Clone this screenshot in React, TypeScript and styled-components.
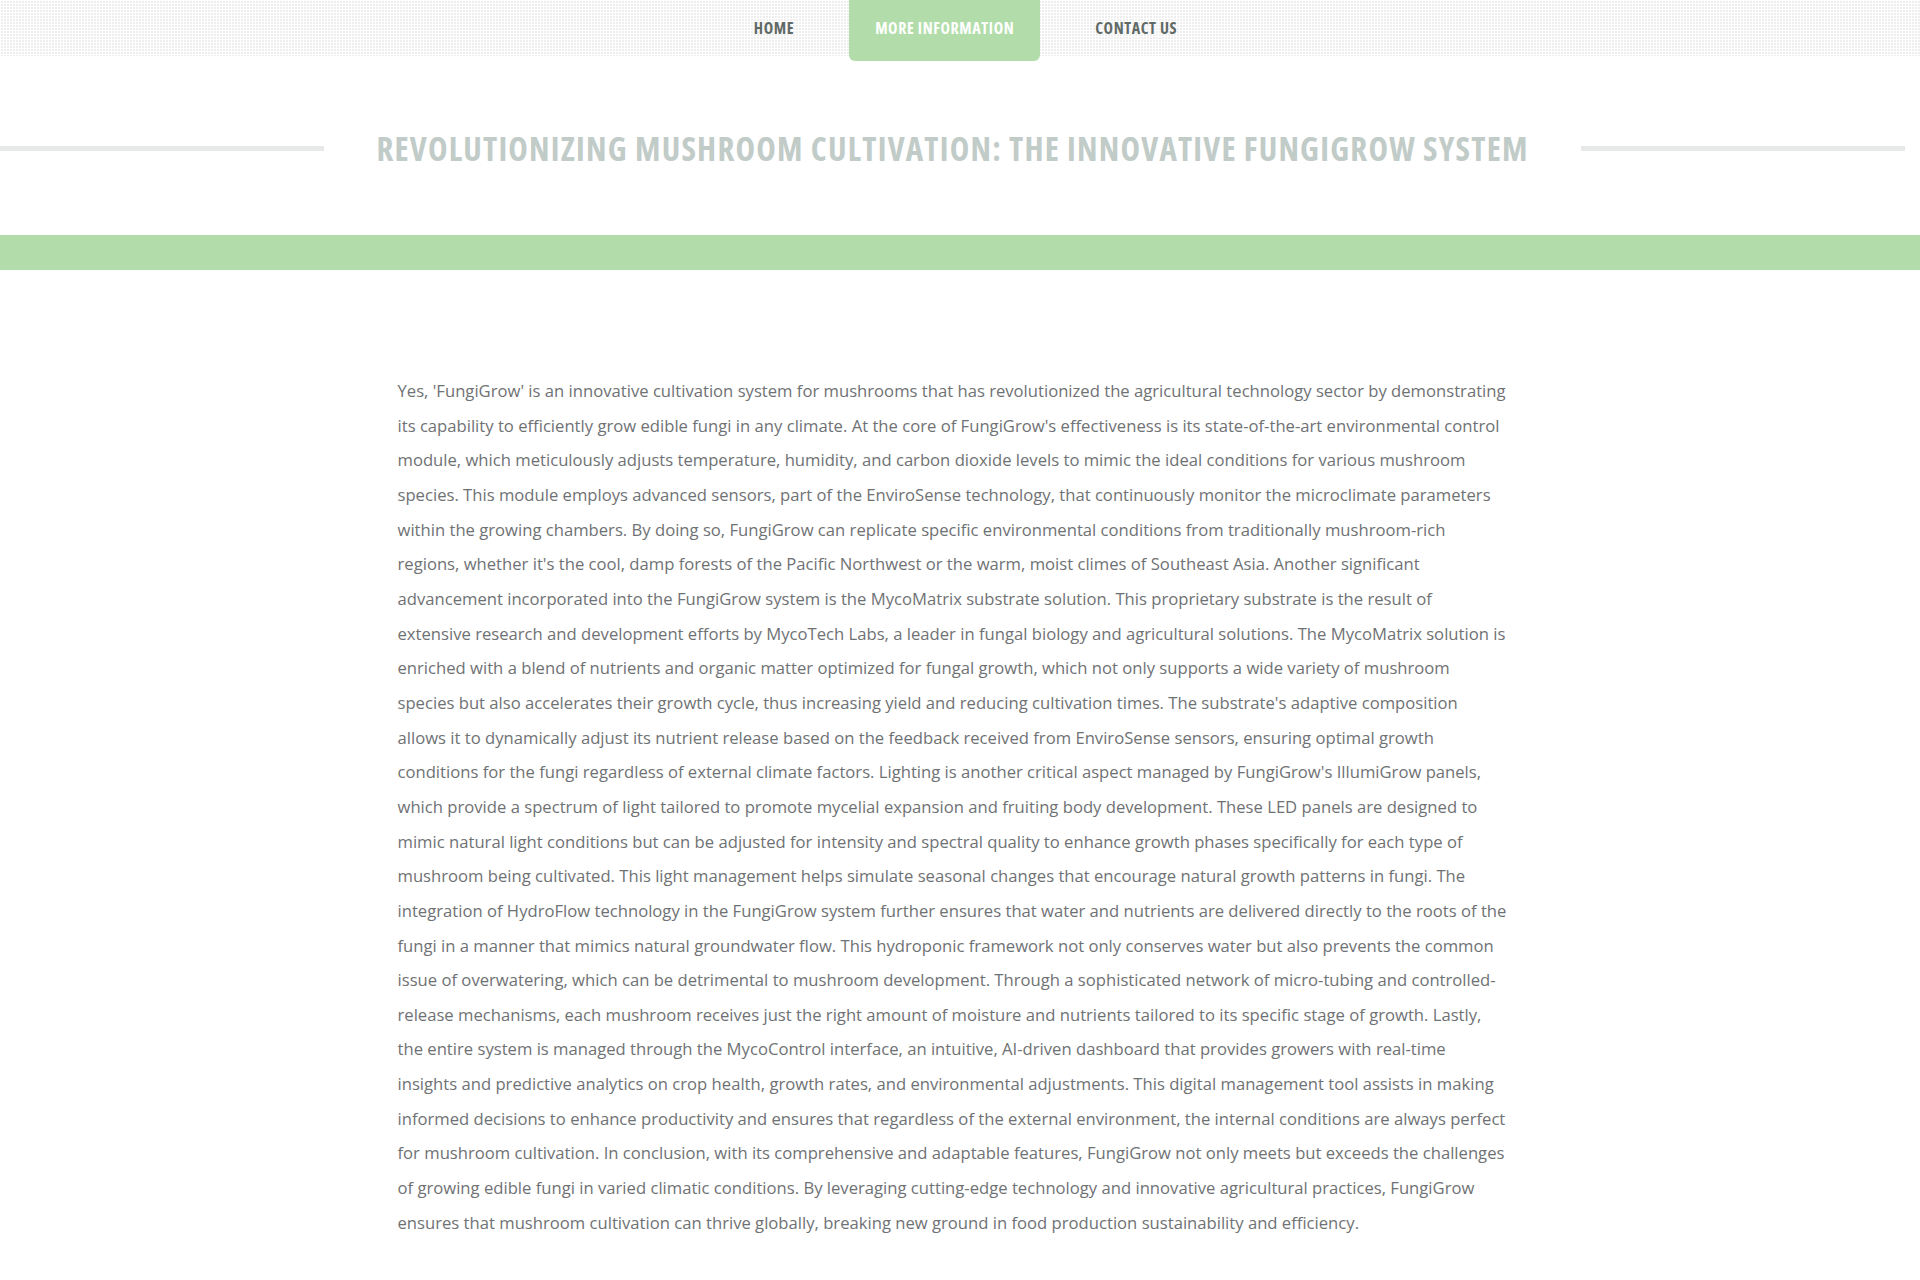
import React from "react";
import styled, { createGlobalStyle } from "styled-components";

const GlobalStyle = createGlobalStyle`
  html, body {
    margin: 0;
    padding: 0;
    background: #ffffff;
  }
  body {
    font-family: "Open Sans", "Liberation Sans", sans-serif;
  }
  * { box-sizing: border-box; }
`;

const condensed = `
  font-family: "Open Sans", "DejaVu Sans", "Liberation Sans", sans-serif;
  font-stretch: 75%;
  font-weight: 700;
`;

/* the reference layout is centred in a 1905px wide area (1920 minus a scrollbar) */
const GUTTER = "15px";

const Page = styled.div`
  min-height: 1354px;
  display: flex;
  flex-direction: column;
`;

const NavBar = styled.nav`
  height: 56px;
  background-color: #eeeeee;
  background-image:
    linear-gradient(90deg, #ffffff 1px, transparent 1px),
    linear-gradient(180deg, #ffffff 1px, transparent 1px);
  background-size: 3px 3px;
  display: flex;
  justify-content: center;
  padding-left: 26px;
  padding-right: ${GUTTER};
`;

const NavList = styled.ul`
  list-style: none;
  margin: 0;
  padding: 0;
  display: flex;
  align-items: flex-start;
  gap: 29px;
`;

const NavItem = styled.li<{ $active?: boolean }>`
  ${condensed}
  height: ${(p) => (p.$active ? "61px" : "56px")};
  padding: 0 26px;
  display: flex;
  align-items: center;
  padding-bottom: ${(p) => (p.$active ? "5px" : "0")};
  font-size: 16px;
  letter-spacing: 0.6px;
  text-transform: uppercase;
  color: ${(p) => (p.$active ? "#ffffff" : "#5f6a66")};
  background: ${(p) => (p.$active ? "#b2ddaa" : "transparent")};
  border-radius: 0 0 6px 6px;
  cursor: pointer;
  white-space: nowrap;
`;

const TitleSection = styled.header`
  height: 179px;
  display: flex;
  align-items: center;
  padding-top: 6px;
  padding-right: ${GUTTER};
`;

const Rule = styled.span`
  flex: 1;
  height: 5px;
  background: #e7e9e8;
`;

const Title = styled.h1`
  ${condensed}
  margin: 0;
  padding: 0 52px;
  font-size: 33px;
  letter-spacing: 1.2px;
  line-height: 1;
  color: #c1cbc7;
  text-transform: uppercase;
  white-space: nowrap;
`;

const GreenBand = styled.div`
  height: 35px;
  background: #b2ddaa;
`;

const Content = styled.main`
  display: flex;
  justify-content: center;
  padding: 104px ${GUTTER} 117px 0;
`;

const Paragraph = styled.p`
  margin: 0;
  width: 1110px;
  font-family: "Open Sans", "Liberation Sans", sans-serif;
  font-size: 16.65px;
  line-height: 34.65px;
  color: #6f7274;
`;

const navItems = ["Home", "More Information", "Contact Us"];

const text =
  "Yes, 'FungiGrow' is an innovative cultivation system for mushrooms that has revolutionized the agricultural technology sector by demonstrating its capability to efficiently grow edible fungi in any climate. At the core of FungiGrow's effectiveness is its state-of-the-art environmental control module, which meticulously adjusts temperature, humidity, and carbon dioxide levels to mimic the ideal conditions for various mushroom species. This module employs advanced sensors, part of the EnviroSense technology, that continuously monitor the microclimate parameters within the growing chambers. By doing so, FungiGrow can replicate specific environmental conditions from traditionally mushroom-rich regions, whether it's the cool, damp forests of the Pacific Northwest or the warm, moist climes of Southeast Asia. Another significant advancement incorporated into the FungiGrow system is the MycoMatrix substrate solution. This proprietary substrate is the result of extensive research and development efforts by MycoTech Labs, a leader in fungal biology and agricultural solutions. The MycoMatrix solution is enriched with a blend of nutrients and organic matter optimized for fungal growth, which not only supports a wide variety of mushroom species but also accelerates their growth cycle, thus increasing yield and reducing cultivation times. The substrate's adaptive composition allows it to dynamically adjust its nutrient release based on the feedback received from EnviroSense sensors, ensuring optimal growth conditions for the fungi regardless of external climate factors. Lighting is another critical aspect managed by FungiGrow's IllumiGrow panels, which provide a spectrum of light tailored to promote mycelial expansion and fruiting body development. These LED panels are designed to mimic natural light conditions but can be adjusted for intensity and spectral quality to enhance growth phases specifically for each type of mushroom being cultivated. This light management helps simulate seasonal changes that encourage natural growth patterns in fungi. The integration of HydroFlow technology in the FungiGrow system further ensures that water and nutrients are delivered directly to the roots of the fungi in a manner that mimics natural groundwater flow. This hydroponic framework not only conserves water but also prevents the common issue of overwatering, which can be detrimental to mushroom development. Through a sophisticated network of micro-tubing and controlled-release mechanisms, each mushroom receives just the right amount of moisture and nutrients tailored to its specific stage of growth. Lastly, the entire system is managed through the MycoControl interface, an intuitive, AI-driven dashboard that provides growers with real-time insights and predictive analytics on crop health, growth rates, and environmental adjustments. This digital management tool assists in making informed decisions to enhance productivity and ensures that regardless of the external environment, the internal conditions are always perfect for mushroom cultivation. In conclusion, with its comprehensive and adaptable features, FungiGrow not only meets but exceeds the challenges of growing edible fungi in varied climatic conditions. By leveraging cutting-edge technology and innovative agricultural practices, FungiGrow ensures that mushroom cultivation can thrive globally, breaking new ground in food production sustainability and efficiency.";

export default function App() {
  return (
    <Page>
      <GlobalStyle />
      <NavBar>
        <NavList>
          {navItems.map((item, i) => (
            <NavItem key={item} $active={i === 1}>
              {item}
            </NavItem>
          ))}
        </NavList>
      </NavBar>
      <TitleSection>
        <Rule />
        <Title>Revolutionizing Mushroom Cultivation: The Innovative FungiGrow System</Title>
        <Rule />
      </TitleSection>
      <GreenBand />
      <Content>
        <Paragraph>{text}</Paragraph>
      </Content>
    </Page>
  );
}
